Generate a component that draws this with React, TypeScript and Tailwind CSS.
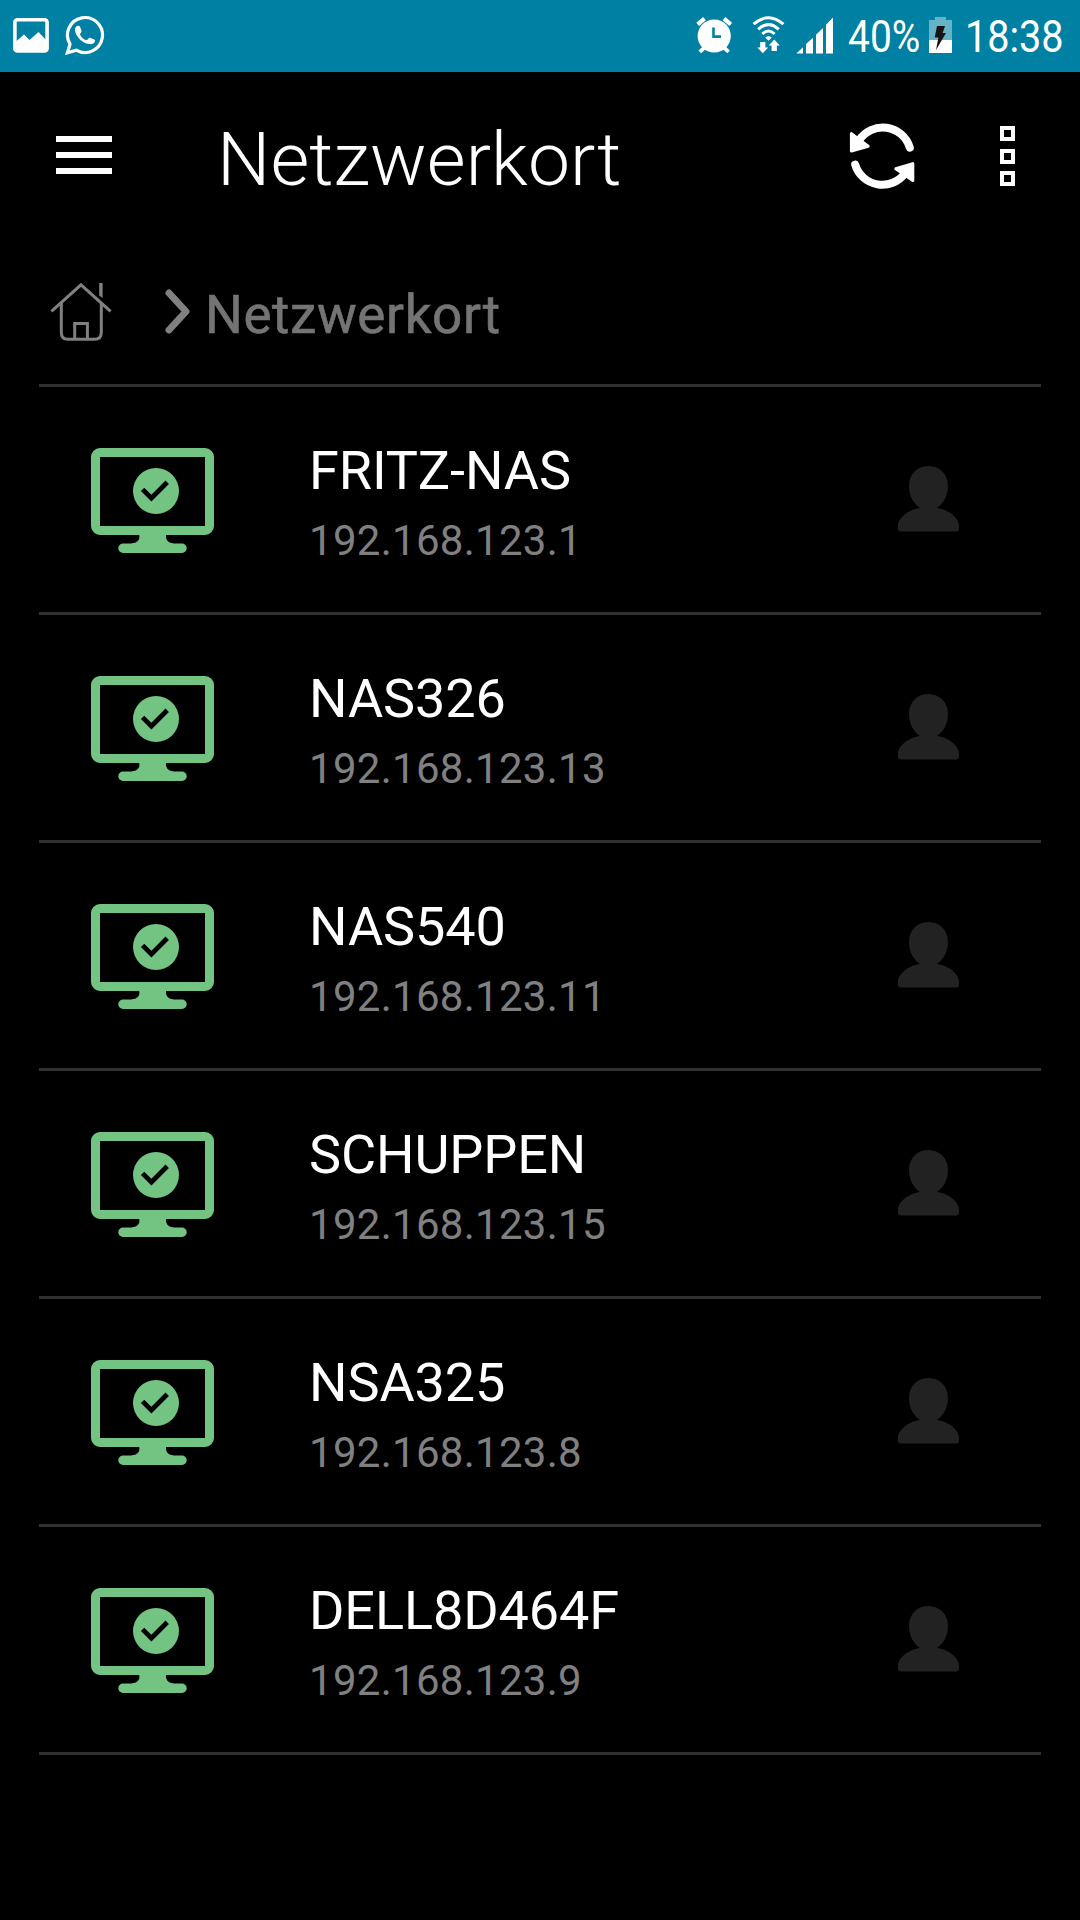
import React from 'react';

type Host = {
  name: string;
  ip: string;
};

const hosts: Host[] = [
  { name: 'FRITZ-NAS', ip: '192.168.123.1' },
  { name: 'NAS326', ip: '192.168.123.13' },
  { name: 'NAS540', ip: '192.168.123.11' },
  { name: 'SCHUPPEN', ip: '192.168.123.15' },
  { name: 'NSA325', ip: '192.168.123.8' },
  { name: 'DELL8D464F', ip: '192.168.123.9' },
];

function PictureIcon() {
  return (
    <svg className="shrink-0" width="36" height="35" viewBox="0 0 36 35">
      <rect x="1.9" y="1.7" width="32.2" height="31.2" rx="2.5" fill="none" stroke="#fff" strokeWidth="3.6" />
      <path d="M3 23.5 L11 16.5 L16.5 22 L25.5 14 L33 22 V33 H3 Z" fill="#fff" />
    </svg>
  );
}

function WhatsAppIcon() {
  return (
    <svg className="shrink-0" width="40" height="40" viewBox="65 15 40 40">
      <path
        d="M67.4 52.8 L70 44.1 A17.5 17.5 0 1 1 76.2 50.2 Z"
        fill="none"
        stroke="#fff"
        strokeWidth="3.2"
      />
      <path
        d="M75.2 28.3 C75.5 26.5 77 25.6 78.4 25.8 C79.5 25.9 80 26.6 80.5 28 L81.4 30.6 C81.9 32.2 80.2 33.4 80 34.4 C81.2 37.2 83.5 39.3 86.6 40.2 C87.7 39.8 88.7 37.6 89.9 37.7 L94.3 39.6 C95.4 40.2 95.2 41.4 94.6 42.3 C93.5 43.8 91.4 44.4 89.2 44.1 C85 43.5 81 41.1 78.2 37.4 C76 34.5 74.6 31.6 75.2 28.3 Z"
        fill="#fff"
      />
    </svg>
  );
}

function AlarmIcon() {
  return (
    <svg className="shrink-0" width="36" height="38" viewBox="696 16 36 38">
      <g stroke="#fff" strokeWidth="4.2">
        <path d="M697.7 24.4 L704.5 18.6" />
        <path d="M724 18.6 L730.8 24.4" />
      </g>
      <path d="M704 48 L699.8 51.8 M724.4 48 L728.6 51.8" stroke="#fff" strokeWidth="3.8" />
      <circle cx="714.2" cy="36" r="16.6" fill="#fff" />
      <path d="M713.5 27.5 V36.6 H721" fill="none" stroke="#0080a2" strokeWidth="2.6" />
    </svg>
  );
}

function WifiIcon() {
  return (
    <svg className="shrink-0" width="33" height="39" viewBox="752 15 33 39">
      <g fill="none" stroke="#fff" strokeWidth="3">
        <path d="M753.6 24.2 Q768.5 11.2 783.4 24.2" />
        <path d="M758.2 29.4 Q768.5 19.8 778.8 29.4" />
        <path d="M762.4 34 Q768.5 28 774.6 34" />
      </g>
      <path d="M765.2 37.6 Q768.5 34.8 771.8 37.6 L768.5 40.8 Z" fill="#fff" />
      <path d="M760.2 42 H765.4 V47.4 H768.2 L762.8 53.2 L757.4 47.4 H760.2 Z" fill="#fff" />
      <path d="M771.6 51 H776.9 V45.4 H779.8 L774.2 39.6 L768.8 45.4 H771.6 Z" fill="#fff" />
    </svg>
  );
}

function SignalIcon() {
  return (
    <svg className="shrink-0" width="37" height="37" viewBox="796 16.5 37 37">
      <path
        d="M796.3 53 L803 46.8 V53 Z M806 53 V43.6 L813 37.3 V53 Z M816 53 V34.2 L823 27.6 V53 Z M826 53 V24.2 L833 17 V53 Z"
        fill="#fff"
      />
    </svg>
  );
}

function BatteryIcon() {
  return (
    <svg className="shrink-0" width="23" height="36" viewBox="0 0 23 36">
      <path d="M6 0 H17 V3 H23 V36 H0 V3 H6 Z" fill="#66b3c8" />
      <path d="M0 23 H23 V36 H0 Z" fill="#fff" />
      <path d="M8 9 H16 L13.6 16 H17 L7 33 L9.4 20.4 H5.7 Z" fill="#151515" />
    </svg>
  );
}

function RefreshIcon() {
  return (
    <svg className="shrink-0" width="66" height="68" viewBox="849 122 66 68">
      <g fill="none" stroke="#fff" strokeWidth="8" strokeLinecap="round">
        <path d="M859 140.4 A28.3 28.3 0 0 1 909.8 147.6" />
        <path d="M855.2 164.6 A28.3 28.3 0 0 0 905 173.4" />
      </g>
      <g fill="#fff" stroke="#fff" strokeWidth="3" strokeLinejoin="round">
        <path d="M851.4 133.6 L868.2 146.2 L851.4 151 Z" />
        <path d="M912.8 163.6 V180.6 L895.8 168.8 Z" />
      </g>
    </svg>
  );
}

function HomeIcon() {
  return (
    <svg className="shrink-0" width="62" height="60" viewBox="50 282 62 60">
      <g fill="none" stroke="#808080" strokeWidth="3">
        <path d="M51.4 311.4 L81 284.8 L110.6 311.4" />
        <path d="M61.3 303 V332.5 Q61.3 339.3 68 339.3 H94.5 Q101.3 339.3 101.3 332.5 V303" />
        <path d="M74.7 339 V323.5 H87.4 V339" />
      </g>
      <path d="M99.2 283 H102.6 V298 L99.2 295.4 Z" fill="#808080" />
    </svg>
  );
}

function MonitorIcon() {
  return (
    <svg className="shrink-0" width="123" height="105" viewBox="0 0 123 105">
      <path
        d="M9 0 H114 A9 9 0 0 1 123 9 V78 A9 9 0 0 1 114 87 H9 A9 9 0 0 1 0 78 V9 A9 9 0 0 1 9 0 Z M9 9 V78 H114 V9 Z"
        fill="#73c483"
        fillRule="evenodd"
      />
      <path
        d="M48 86 H75 V89 C75.5 93.5 79 95.5 85 95.5 H91 A4.75 4.75 0 0 1 91 105 H32 A4.75 4.75 0 0 1 32 95.5 H38 C44.5 95.5 48 93.5 48.5 89 Z"
        fill="#73c483"
      />
      <circle cx="65" cy="43" r="23" fill="#73c483" />
      <path d="M51.6 41.4 L60.4 50.2 L76.2 34.2" fill="none" stroke="#000" strokeWidth="4.8" />
    </svg>
  );
}

function PersonIcon() {
  return (
    <svg className="shrink-0" width="61" height="66" viewBox="0 0 61 66">
      <path
        d="M30.5 0 C42 0 50 8.5 50 20 C50 30.5 45 38 39 42 C50.5 43.6 61 51.5 61 60 V62.5 Q61 65.5 58 65.5 H3 Q0 65.5 0 62.5 V60 C0 51.5 10.5 43.6 22 42 C16 38 11 30.5 11 20 C11 8.5 19 0 30.5 0 Z"
        fill="#222"
      />
    </svg>
  );
}

function StatusBar() {
  return (
    <div className="flex h-[72px] items-start bg-[#0080a2] text-white">
      <div className="ml-[13px] mt-[18px]">
        <PictureIcon />
      </div>
      <div className="ml-4 mt-[15px]">
        <WhatsAppIcon />
      </div>
      <div className="ml-auto mt-4">
        <AlarmIcon />
      </div>
      <div className="ml-5 mt-[15px]">
        <WifiIcon />
      </div>
      <div className="ml-[11px] mt-[16.5px]">
        <SignalIcon />
      </div>
      <div className="ml-[15px] mt-[14px] w-[81px] whitespace-nowrap text-[45px] leading-none">
        <span className="inline-block origin-left scale-x-[0.865]">40%</span>
      </div>
      <div className="mt-[17px]">
        <BatteryIcon />
      </div>
      <div className="ml-[13px] mr-[11px] mt-[14px] w-[104px] whitespace-nowrap text-[45px] leading-none">
        <span className="inline-block origin-left scale-x-[0.88]">18:38</span>
      </div>
    </div>
  );
}

function AppBar() {
  return (
    <div className="flex h-[168px] items-start text-white">
      <div className="ml-14 mt-16 flex w-14 flex-col gap-2.5">
        <div className="h-1.5 bg-white" />
        <div className="h-1.5 bg-white" />
        <div className="h-1.5 bg-white" />
      </div>
      <h1 className="ml-[105px] mt-[50px] text-[75px] font-light leading-none tracking-[0.1px]">Netzwerkort</h1>
      <div className="ml-auto mt-[50px]">
        <RefreshIcon />
      </div>
      <div className="ml-[85px] mr-[65px] mt-[54px] flex w-[15px] flex-col gap-[7.5px]">
        <div className="h-[15px] border-4 border-white" />
        <div className="h-[15px] border-4 border-white" />
        <div className="h-[15px] border-4 border-white" />
      </div>
    </div>
  );
}

function Breadcrumb() {
  return (
    <div className="mx-[39px] flex h-[147px] items-start border-b-[3px] border-[#303030]">
      <div className="ml-[11px] mt-[42px]">
        <HomeIcon />
      </div>
      <svg className="ml-[52px] mt-[48px] shrink-0" width="28" height="48" viewBox="0 0 28 48">
        <path d="M5 5 L22 23.5 L5 42" fill="none" stroke="#808080" strokeWidth="7" strokeLinecap="round" strokeLinejoin="round" />
      </svg>
      <span className="ml-[13px] mt-[49px] text-[53px] leading-none tracking-[0.6px] text-[#747474] [-webkit-text-stroke:0.6px_#747474]">
        Netzwerkort
      </span>
    </div>
  );
}

function HostRow({ host }: { host: Host }) {
  return (
    <li className="flex h-[228px] items-start border-b-[3px] border-[#303030]">
      <div className="ml-[52px] mt-[61px]">
        <MonitorIcon />
      </div>
      <div className="ml-[95px] mt-[57px] flex flex-col gap-[22px]">
        <span className="text-[54px] leading-none tracking-[-0.1px] text-white">{host.name}</span>
        <span className="text-[42px] leading-none tracking-[0.28px] text-[#808080]">{host.ip}</span>
      </div>
      <div className="ml-auto mr-[82px] mt-[79px]">
        <PersonIcon />
      </div>
    </li>
  );
}

export default function App() {
  return (
    <div className="h-[1920px] w-[1080px] overflow-hidden bg-black font-['Roboto',sans-serif]">
      <StatusBar />
      <AppBar />
      <Breadcrumb />
      <ul className="mx-[39px]">
        {hosts.map((host) => (
          <HostRow key={host.ip} host={host} />
        ))}
      </ul>
    </div>
  );
}
